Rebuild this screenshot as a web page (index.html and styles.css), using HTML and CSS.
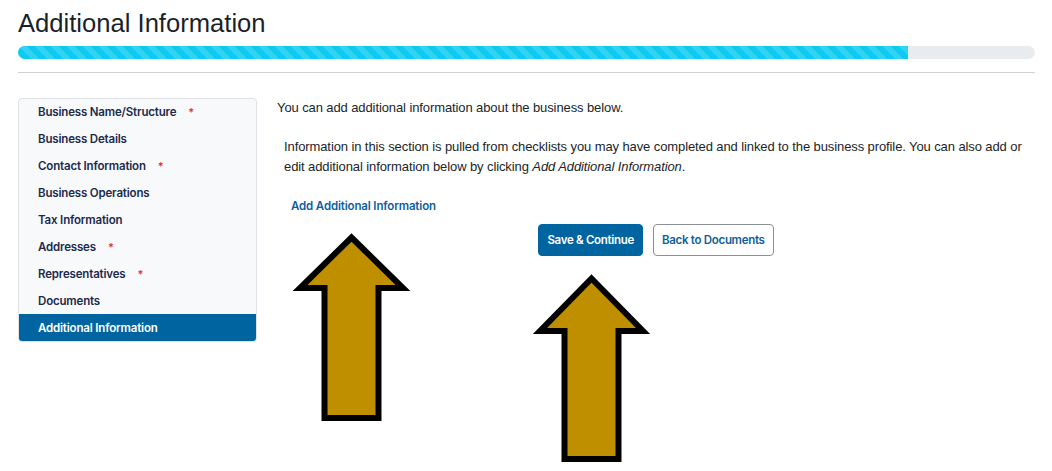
FILE: index.html
```html
<!DOCTYPE html>
<html lang="en">
<head>
<meta charset="utf-8">
<title>Additional Information</title>
<link rel="stylesheet" href="styles.css">
</head>
<body>
<div class="page">
  <h1 class="title">Additional Information</h1>
  <div class="progress"><div class="progress-bar" style="width: 87.5%"></div></div>
  <hr class="rule">
  <div class="layout">
    <nav class="sidebar">
      <a class="nav-item">Business Name/Structure<span class="req">*</span></a>
      <a class="nav-item">Business Details</a>
      <a class="nav-item">Contact Information<span class="req">*</span></a>
      <a class="nav-item">Business Operations</a>
      <a class="nav-item">Tax Information</a>
      <a class="nav-item">Addresses<span class="req">*</span></a>
      <a class="nav-item">Representatives<span class="req">*</span></a>
      <a class="nav-item">Documents</a>
      <a class="nav-item active">Additional Information</a>
    </nav>
    <main class="main">
      <p class="lead">You can add additional information about the business below.</p>
      <p class="info">Information in this section is pulled from checklists you may have completed and linked to the business profile. You can also add or edit additional information below by clicking <em>Add Additional Information</em>.</p>
      <a class="add-link">Add Additional Information</a>
      <div class="actions">
        <button class="btn btn-primary">Save &amp; Continue</button>
        <button class="btn btn-outline">Back to Documents</button>
      </div>
    </main>
  </div>
</div>
<svg class="arrow arrow-one" width="120" height="190" viewBox="0 0 120 190"><polygon points="59.5,4.5 111,55 86.5,55 86.5,185 32.5,185 32.5,55 8,55"/></svg>
<svg class="arrow arrow-two" width="120" height="190" viewBox="0 0 120 190"><polygon points="59.5,4.5 111,57 86.5,57 86.5,185 32.5,185 32.5,57 8,57"/></svg>
</body>
</html>
```
FILE: styles.css
```css
html, body {
  margin: 0;
  padding: 0;
  background: #ffffff;
}
body {
  position: relative;
  min-height: 100vh;
  font-family: "Liberation Sans", Arial, sans-serif;
  color: #212529;
}
.page {
  padding: 8px 17px 0 18px;
}
.title {
  margin: 0;
  font: 400 25.6px/31px "Liberation Sans", Arial, sans-serif;
  color: #1b1f2a;
}
.progress {
  margin-top: 7px;
  height: 13px;
  border-radius: 7px;
  background: #e9ecef;
  overflow: hidden;
  display: flex;
}
.progress-bar {
  height: 100%;
  background-color: #0dcaf0;
  background-image: linear-gradient(45deg, rgba(255,255,255,.15) 25%, transparent 25%, transparent 50%, rgba(255,255,255,.15) 50%, rgba(255,255,255,.15) 75%, transparent 75%, transparent);
  background-size: 16px 16px;
}
.rule {
  margin: 13px 0 0 0;
  border: 0;
  border-top: 1px solid #cfd1d6;
  height: 0;
}
.layout {
  display: flex;
  gap: 20px;
  margin-top: 25px;
  align-items: flex-start;
}
.sidebar {
  width: 239px;
  box-sizing: border-box;
  display: flex;
  flex-direction: column;
  background: #f8f9fa;
  border: 1px solid #dee2e6;
  border-radius: 4px;
  overflow: hidden;
}
.nav-item {
  height: 27px;
  display: flex;
  align-items: center;
  padding-left: 19px;
  font-family: Inter, "Noto Sans", sans-serif;
  font-size: 11.5px;
  font-weight: 600;
  letter-spacing: -0.17px;
  color: #1b2a4e;
}
.nav-item:first-child {
  height: 26px;
}
.nav-item.active {
  background: #0064a0;
  color: #ffffff;
}
.req {
  color: #dc3545;
  margin-left: 12px;
  font-size: 11px;
}
.main {
  flex: 1;
  min-width: 0;
  display: flex;
  flex-direction: column;
  align-items: flex-start;
}
.lead {
  margin: 0;
  font-size: 13px;
  line-height: 20px;
  letter-spacing: -0.1px;
}
.info {
  margin: 19px 0 0 0;
  padding-left: 7px;
  font-size: 13px;
  line-height: 19.5px;
  letter-spacing: -0.1px;
}
.add-link {
  margin: 22px 0 0 14px;
  font-family: Inter, "Noto Sans", sans-serif;
  font-size: 11.5px;
  line-height: 16px;
  font-weight: 600;
  letter-spacing: -0.15px;
  color: #0d5f9e;
}
.actions {
  align-self: stretch;
  display: flex;
  justify-content: center;
  gap: 10px;
  margin-top: 10px;
}
.btn {
  height: 32px;
  box-sizing: border-box;
  padding: 0 8px;
  border-radius: 4px;
  font-family: Inter, "Noto Sans", sans-serif;
  font-size: 11.5px;
  font-weight: 600;
  letter-spacing: -0.3px;
}
.btn-primary {
  background: #0064a0;
  border: 1px solid #0064a0;
  color: #ffffff;
}
.btn-outline {
  background: #ffffff;
  border: 1px solid #8a8f98;
  color: #0d5f9e;
}
.arrow {
  position: absolute;
  overflow: visible;
}
.arrow polygon {
  fill: #bf8f00;
  stroke: #000000;
  stroke-width: 6;
  stroke-linejoin: miter;
}
.arrow-one {
  left: 292px;
  top: 233px;
}
.arrow-two {
  left: 532px;
  top: 274px;
}
```
